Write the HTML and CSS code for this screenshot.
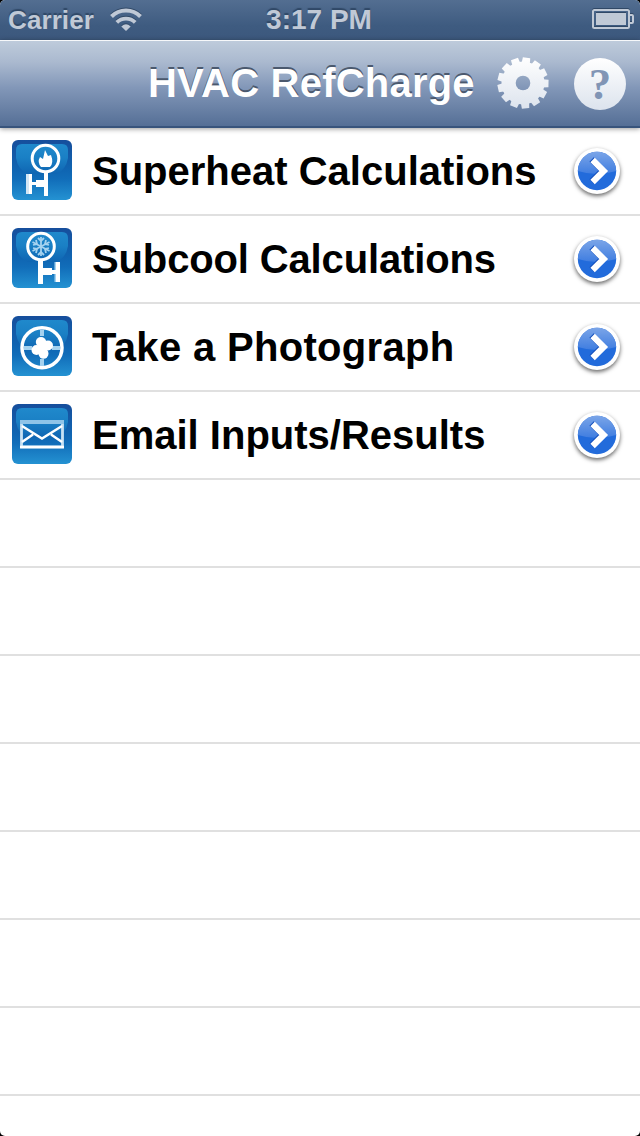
FILE: index.html
```html
<!DOCTYPE html>
<html lang="en">
<head>
<meta charset="utf-8">
<title>HVAC RefCharge</title>
<link rel="stylesheet" href="styles.css">
</head>
<body>
<svg class="defs" width="0" height="0" aria-hidden="true">
  <defs>
    <linearGradient id="tile" x1="0" y1="0" x2="0" y2="1"><stop offset="0" stop-color="#164e9c"/><stop offset=".5" stop-color="#0f65b2"/><stop offset=".65" stop-color="#116db9"/><stop offset="1" stop-color="#2492d2"/></linearGradient>
    <linearGradient id="gloss" x1="0" y1="0" x2="0" y2="1"><stop offset="0" stop-color="#2089cc"/><stop offset=".45" stop-color="#1a80c5"/><stop offset="1" stop-color="#0f65b2"/></linearGradient>
    <linearGradient id="silver" x1="0" y1="0" x2="0" y2="1"><stop offset="0" stop-color="#fff"/><stop offset="1" stop-color="#dce3ed"/></linearGradient>
    <linearGradient id="blue" x1="0" y1="0" x2="0" y2="1"><stop offset="0" stop-color="#7ba5e8"/><stop offset="1" stop-color="#3f7de0"/></linearGradient>
    <symbol id="base" viewBox="0 0 60 60"><rect width="60" height="60" rx="6" fill="url(#tile)"/><path d="M4 10Q4 4 10 4H50Q56 4 56 10V18Q54 30 44 34H16Q6 30 4 18Z" fill="url(#gloss)"/></symbol>
    <symbol id="disclosure" viewBox="0 0 60 60">
      <circle cx="30" cy="30" r="23" fill="#fff"/>
      <circle cx="30" cy="30" r="19.200" fill="#226bdb"/>
      <path d="M10.800 30A19.200 19.200 0 0 1 49.200 30Q30 36 10.800 30Z" fill="url(#blue)"/>
      <path d="M24.600 18.500L35.700 29.500L24.600 40.500" fill="none" stroke="#1550bd" stroke-width="6.200"/>
      <path d="M25.600 19L36.700 30L25.600 41" fill="none" stroke="#fff" stroke-width="6.200"/>
    </symbol>
  </defs>
</svg>
<main class="screen">
  <header class="status">
    <div class="network"><span class="carrier">Carrier</span>
      <svg class="wifi" width="34" height="26" viewBox="0 0 34 26"><g fill="none" stroke="#c0c9d6" stroke-width="4"><path d="M2.500 10.500A20.500 20.500 0 0 1 31.500 10.500"/><path d="M7.800 16.400A13 13 0 0 1 26.200 16.400" stroke-width="3.800"/></g><path d="M12.300 20.500Q17 16.200 21.700 20.500L17 25Z" fill="#c0c9d6"/></svg>
    </div>
    <span class="time">3:17 PM</span>
    <svg class="battery" width="42" height="20" viewBox="0 0 42 20"><rect x="1" y="1" width="36" height="18" rx="1.500" fill="none" stroke="#c0c9d6" stroke-width="2"/><rect x="4" y="4" width="30" height="12" fill="#c0c9d6"/><path d="M38 6H40Q41 6 41 7V13Q41 14 40 14H38" fill="none" stroke="#c0c9d6" stroke-width="2"/></svg>
  </header>
  <nav class="navbar">
    <h1 class="title">HVAC RefCharge</h1>
    <svg class="gear" width="52" height="52" viewBox="-26 -26 52 52">
      <defs>
        <path id="tooth" d="M-4.200-19L-3.700-25.500H3.700L4.200-19Z" fill="#fff"/>
        <mask id="cog" maskUnits="userSpaceOnUse" x="-26" y="-26" width="52" height="52">
          <circle r="21.500" fill="#fff"/>
          <use href="#tooth" transform="rotate(8)"/><use href="#tooth" transform="rotate(35.700)"/><use href="#tooth" transform="rotate(63.400)"/><use href="#tooth" transform="rotate(91.100)"/><use href="#tooth" transform="rotate(118.800)"/><use href="#tooth" transform="rotate(146.500)"/><use href="#tooth" transform="rotate(174.200)"/><use href="#tooth" transform="rotate(201.900)"/><use href="#tooth" transform="rotate(229.600)"/><use href="#tooth" transform="rotate(257.300)"/><use href="#tooth" transform="rotate(285)"/><use href="#tooth" transform="rotate(312.700)"/><use href="#tooth" transform="rotate(340.400)"/>
          <circle r="7.300" fill="#000"/>
        </mask>
      </defs>
      <rect x="-26" y="-26" width="52" height="52" fill="url(#silver)" mask="url(#cog)"/>
    </svg>
    <span class="help">?</span>
  </nav>
  <ul class="list">
    <li class="row"><svg class="icon" viewBox="0 0 60 60"><use href="#base"/><circle cx="33.500" cy="18.500" r="13.300" fill="none" stroke="#fff" stroke-width="3"/><path d="M29 27Q25 22 28 17L31 19L33 10L36 16L39 15Q42 23 38 27Z" fill="#fff"/><path d="M32 32H36V56H32ZM20 42H24V40H32V47H24V45H20Z" fill="#fff"/><path d="M14 34H20V54H14Z" fill="#d2e6f5"/><path d="M17 34H20V54H17Z" fill="#fff"/></svg><span class="label">Superheat Calculations</span><svg class="more" viewBox="0 0 60 60"><use href="#disclosure"/></svg></li>
    <li class="row"><svg class="icon" viewBox="0 0 60 60"><use href="#base"/><circle cx="29" cy="18.500" r="13.300" fill="none" stroke="#fff" stroke-width="3"/><g stroke="#a5d2ef" stroke-width="1.800" fill="none"><path d="M29 9V28M20.500 14L37.500 23M20.500 23L37.500 14"/><path d="M26 10L29 13L32 10M26 27L29 24L32 27M21 17L25 16L24 12M37 17L33 16L34 12M21 20L25 21L24 25M37 20L33 21L34 25"/></g><path d="M26 32H31V56H26ZM31 40H40V42H44V34H48V54H44V46H40V47H31Z" fill="#fff"/><path d="M42.500 34H44V42H42.500ZM42.500 46H44V54H42.500Z" fill="#a5d2ef"/></svg><span class="label subcool">Subcool Calculations</span><svg class="more" viewBox="0 0 60 60"><use href="#disclosure"/></svg></li>
    <li class="row"><svg class="icon" viewBox="0 0 60 60"><use href="#base"/><circle cx="30" cy="31.700" r="20" fill="none" stroke="#fff" stroke-width="3.500"/><path d="M30 14V20M30 43V50M12 32H20M40 32H48" stroke="#a5d2ef" stroke-width="4"/><g fill="#fff"><ellipse cx="29" cy="26" rx="5.200" ry="5"/><ellipse cx="36" cy="29.500" rx="5" ry="5"/><ellipse cx="31.500" cy="37.500" rx="5" ry="5.200"/><ellipse cx="24.500" cy="34" rx="5" ry="5"/><circle cx="30.200" cy="32" r="4"/></g></svg><span class="label photo">Take a Photograph</span><svg class="more" viewBox="0 0 60 60"><use href="#disclosure"/></svg></li>
    <li class="row"><svg class="icon" viewBox="0 0 60 60"><use href="#base"/><path d="M8 18H52" stroke="#8fc4e8" stroke-width="4"/><path d="M9.500 20V43H50.500V20" fill="none" stroke="#c7e1f3" stroke-width="2.800"/><path d="M8 43H52M10 22L30 34.500L50 22M10 38L21 30.500M50 38L39 30.500" fill="none" stroke="#fff" stroke-width="2.500"/></svg><span class="label">Email Inputs/Results</span><svg class="more" viewBox="0 0 60 60"><use href="#disclosure"/></svg></li>
    <li class="row"></li><li class="row"></li><li class="row"></li><li class="row"></li><li class="row"></li><li class="row"></li><li class="row"></li>
  </ul>
</main>
</body>
</html>
```
FILE: styles.css
```css
* { box-sizing: border-box; }
body { margin: 0; background: #000; font-family: "Liberation Sans", Arial, sans-serif; font-weight: bold; }
.defs { position: absolute; }
.screen { width: 640px; height: 1136px; overflow: hidden; border-radius: 5px; background: #fff; }
.status { height: 40px; display: grid; grid-template-columns: 1fr auto 1fr; align-items: center; padding: 0 6px 0 8px; color: #c0c9d6; background: linear-gradient(#536e91, #3e5b80 65%, #3c587d); text-shadow: 0 -2px 1px #304866; }
.network { display: flex; align-items: center; gap: 15px; }
.carrier { font-size: 26px; line-height: 40px; letter-spacing: .1px; }
.wifi { margin-top: -2px; filter: drop-shadow(0 -1px 0 #304866); }
.time { font-size: 28px; line-height: 38px; padding-right: 4px; }
.battery { justify-self: end; margin-top: -3px; filter: drop-shadow(0 -1px 0 #304866); }
.navbar { height: 88px; display: flex; align-items: center; padding: 0 14px 0 148px; background: linear-gradient(#becbdb, #aab9cf 25%, #8297b8 55%, #556f96); border-top: 1px solid #f6f8fa; border-bottom: 2px solid #38547c; box-shadow: 0 1px 5px rgba(0,0,0,.4); position: relative; }
.title { margin: 0; padding-bottom: 2px; width: 349px; font-size: 40px; line-height: 48px; letter-spacing: .22px; color: #fff; text-shadow: 0 -2px 0 #4b596e; white-space: nowrap; }
.gear { flex: none; margin-top: -1px; }
.help { width: 52px; height: 52px; margin-left: 25px; border-radius: 50%; background: linear-gradient(#fff, #dce3ed); color: #8195b5; font: bold 45px/53px "Liberation Serif", serif; text-align: center; }
.list { list-style: none; margin: 0; padding: 0; }
.row { height: 88px; display: flex; align-items: center; border-bottom: 2px solid #e0e0e0; padding: 0 13px 2px 12px; }
.icon { width: 60px; height: 60px; flex: none; }
.label { flex: 1; margin-left: 20px; padding-top: 2px; font-size: 40px; line-height: 48px; color: #000; white-space: nowrap; }
.subcool { letter-spacing: -.14px; }
.photo { letter-spacing: .32px; }
.more { width: 60px; height: 60px; margin-top: 1px; flex: none; filter: drop-shadow(0 2px 2px rgba(0,0,0,.6)); }
```
